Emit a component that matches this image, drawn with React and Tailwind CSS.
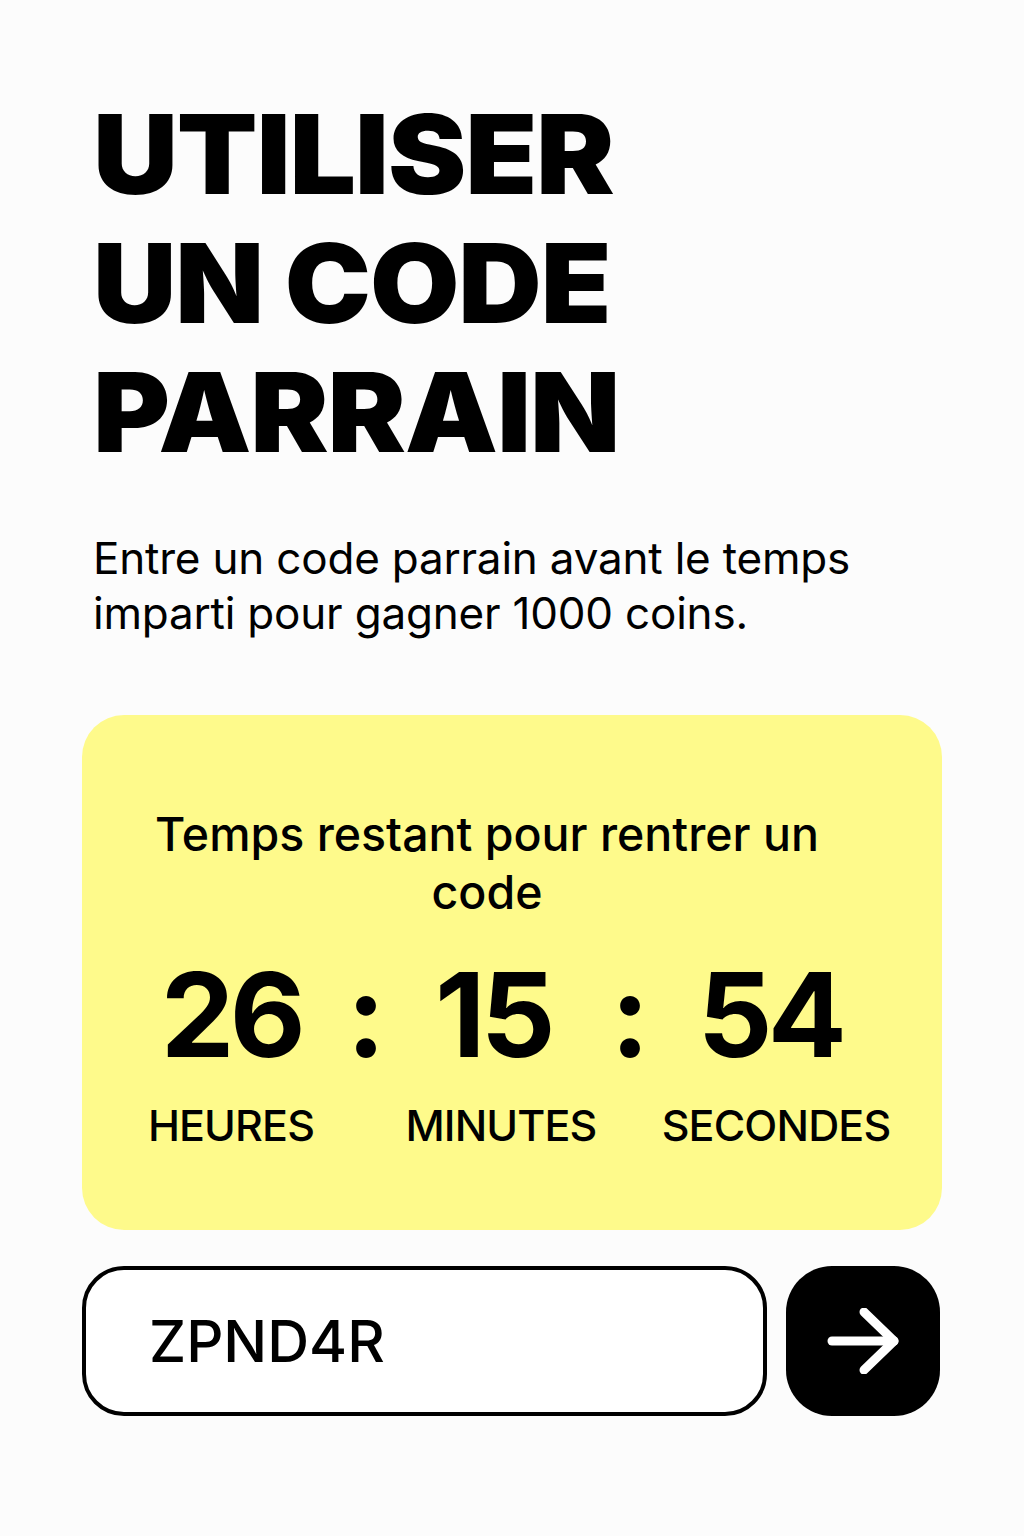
export default function App() {
  const font = { fontFamily: 'Inter, "Noto Sans", sans-serif' };
  return (
    <div className="w-[1024px] h-[1536px] bg-[#fcfcfc] text-black overflow-hidden" style={font}>
      <div className="pt-[90px] pl-[93px]">
        <h1 className="text-[110px] leading-[129px] font-black tracking-[-0.01em] uppercase">
          <div className="origin-left scale-x-[1.07]">UTILISER</div>
          <div className="origin-left scale-x-[1.05]">UN CODE</div>
          <div className="origin-left scale-x-[1.067]">PARRAIN</div>
        </h1>
        <p className="mt-[54px] text-[44px] leading-[55px] font-normal tracking-[-0.2px]">
          Entre un code parrain avant le temps
          <br />
          imparti pour gagner 1000 coins.
        </p>
      </div>

      <div className="ml-[82px] mt-[74px] w-[860px] h-[515px] rounded-[42px] bg-[#fefa8b] pt-[90px]">
        <div className="ml-[60px] w-[690px] text-center text-[46.5px] leading-[58px] font-medium">
          Temps restant pour rentrer un code
        </div>
        <div className="mt-[35px] ml-[34px] grid grid-cols-[230px_40px_224px_40px_252px] items-start">
          <div className="text-center text-[117px] leading-[117px] font-bold tracking-[-0.04em]">26</div>
          <div className="text-center text-[117px] leading-[117px] font-bold">:</div>
          <div className="text-center text-[117px] leading-[117px] font-bold tracking-[-0.04em] pr-[10px]">15</div>
          <div className="text-center text-[117px] leading-[117px] font-bold">:</div>
          <div className="text-center text-[117px] leading-[117px] font-bold tracking-[-0.04em] pr-[12px]">54</div>
          <div className="mt-[31px] text-center text-[43px] leading-[43px] font-medium tracking-[-0.02em]">HEURES</div>
          <div></div>
          <div className="mt-[31px] text-center text-[43px] leading-[43px] font-medium tracking-[-0.02em] pl-[6px]">MINUTES</div>
          <div></div>
          <div className="mt-[31px] text-center text-[43px] leading-[43px] font-medium tracking-[-0.02em]">SECONDES</div>
        </div>
      </div>

      <div className="ml-[82px] mt-[36px] flex gap-[19px]">
        <div className="w-[685px] h-[150px] rounded-[42px] border-[4px] border-black bg-white flex items-center pl-[63px]">
          <span className="text-[58px] font-medium">ZPND4R</span>
        </div>
        <button className="w-[154px] h-[150px] rounded-[46px] bg-black flex items-center justify-center">
          <svg width="72" height="66" viewBox="0 0 72 66" fill="none" stroke="white" strokeWidth="9" strokeLinecap="round" strokeLinejoin="round">
            <path d="M5 33H67" />
            <path d="M37 4L67 33L37 62" />
          </svg>
        </button>
      </div>
    </div>
  );
}
